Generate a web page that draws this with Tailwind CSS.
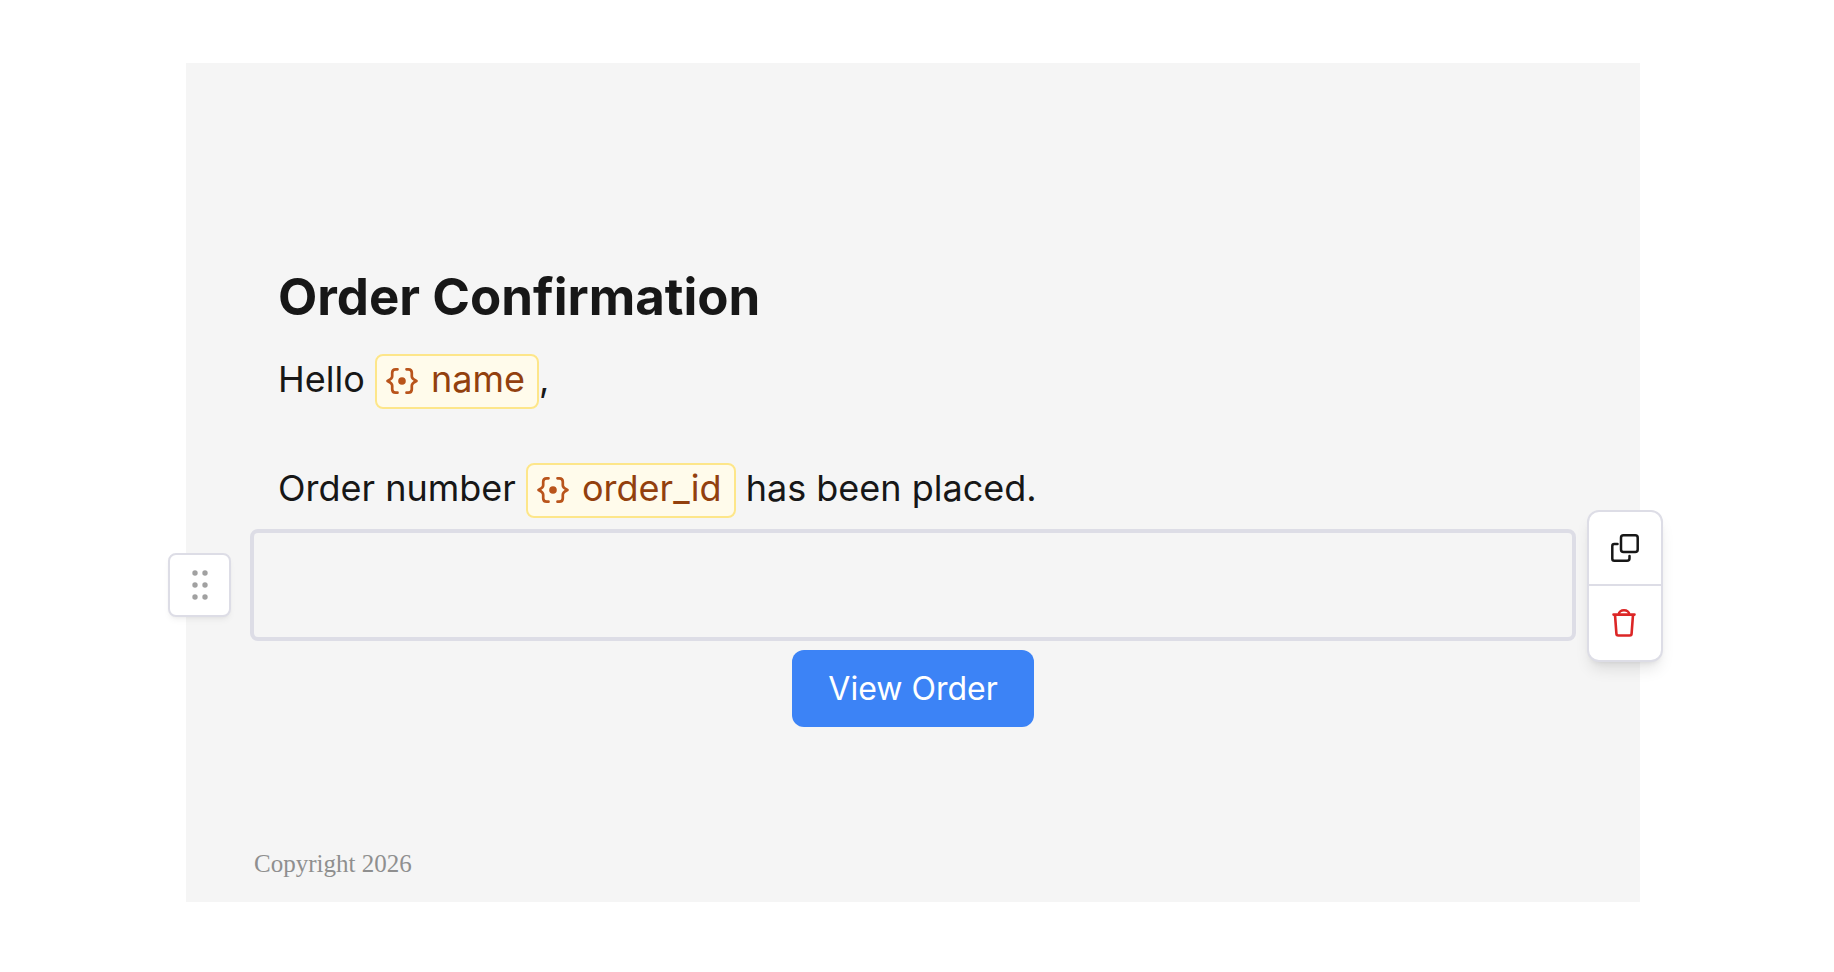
<!DOCTYPE html>
<html lang="en">
<head>
<meta charset="utf-8">
<meta name="viewport" content="width=device-width, initial-scale=1">
<title>Order Confirmation</title>
<script src="https://cdn.jsdelivr.net/npm/@tailwindcss/browser@4"></script>
</head>
<body class="bg-white font-['Inter',sans-serif] text-[#171717]">
<svg class="hidden" aria-hidden="true">
  <symbol id="variable" viewBox="0 0 34 28">
    <g fill="none" stroke="currentColor" stroke-width="2.7" stroke-linecap="round" stroke-linejoin="round">
      <path d="M12.500 2.300h-1.800c-2.500 0-3.500 1.200-3.500 3.500v3.500c0 2-1.500 3.200-4.700 4.700c3.200 1.500 4.700 2.700 4.700 4.700v3.500c0 2.300 1 3.500 3.500 3.500h1.800"/>
      <path d="M21.500 2.300h1.800c2.500 0 3.500 1.200 3.500 3.500v3.500c0 2 1.500 3.200 4.700 4.700c-3.200 1.500-4.700 2.700-4.700 4.700v3.500c0 2.300-1 3.500-3.500 3.500h-1.800"/>
    </g>
    <circle cx="17" cy="14" r="3.800" fill="currentColor"/>
  </symbol>
</svg>
<main class="pt-[63px] pb-[70px] pl-[186px] pr-[194px]">
  <article class="bg-[#f5f5f5] pt-[203px] pb-5 px-16">
    <div class="px-7">
      <h1 class="text-[51px] leading-[62px] font-bold">Order Confirmation</h1>
      <p class="mt-6 text-[36px] leading-[54px]">Hello <span class="rounded-lg border-2 border-[#fde68a] bg-[#fffbeb] pt-px pb-1.5 pl-2 pr-3 text-[#92400e]"><svg class="mr-3 inline h-7 w-[34px] align-[-3px] text-[#b9541b]" aria-hidden="true"><use href="#variable"/></svg>name</span>,</p>
      <p class="mt-[55px] text-[36px] leading-[54px]">Order number <span class="rounded-lg border-2 border-[#fde68a] bg-[#fffbeb] pt-px pb-1.5 pl-2 pr-3 text-[#92400e]"><svg class="mr-3 inline h-7 w-[34px] align-[-3px] text-[#b9541b]" aria-hidden="true"><use href="#variable"/></svg>order_id</span> has been placed.</p>
    </div>
    <div class="relative mt-3.5 h-28 rounded-lg border-4 border-[#dddde6]">
      <button type="button" aria-label="Drag block" class="absolute -left-[86px] top-5 flex h-16 w-[63px] items-center justify-center rounded-lg border-2 border-[#dddde6] bg-white text-[#a1a1a1] shadow-md shadow-black/5">
        <svg class="h-8 w-5" viewBox="0 0 20 32" fill="currentColor" aria-hidden="true"><circle cx="5" cy="4" r="2.700"/><circle cx="15" cy="4" r="2.700"/><circle cx="5" cy="16" r="2.700"/><circle cx="15" cy="16" r="2.700"/><circle cx="5" cy="28" r="2.700"/><circle cx="15" cy="28" r="2.700"/></svg>
      </button>
      <div class="absolute -right-[91px] -top-[23px] flex w-[76px] flex-col divide-y-2 divide-[#dddde6] rounded-xl border-2 border-[#dddde6] bg-white shadow-lg shadow-black/10">
        <button type="button" aria-label="Duplicate block" class="flex h-[74px] items-center justify-center">
          <svg class="h-7 w-7" viewBox="0 0 28 28" fill="none" stroke="currentColor" stroke-width="2.500" stroke-linecap="round" stroke-linejoin="round" aria-hidden="true"><rect x="10" y="1.300" width="16.700" height="16.700" rx="2.500"/><path d="M6.500 10H3.300a2 2 0 0 0-2 2V24.700a2 2 0 0 0 2 2H16a2.500 2.500 0 0 0 2.500-2.500V22"/></svg>
        </button>
        <button type="button" aria-label="Delete block" class="flex h-[74px] items-center justify-center text-[#dc2626]">
          <svg class="h-7 w-7" viewBox="0 0 28 28" fill="none" stroke="currentColor" stroke-width="2.600" stroke-linecap="round" stroke-linejoin="round" aria-hidden="true"><path d="M2.500 5.600H23.500M4 5.800L5.400 24.500a2 2 0 0 0 2 2H18.600a2 2 0 0 0 2-2L22 5.800M7.800 5.300a5.200 4 0 0 1 10.400 0"/></svg>
        </button>
      </div>
    </div>
    <div class="mt-[9px] flex justify-center">
      <a href="#" class="rounded-xl bg-[#3c83f6] px-9 py-[14px] text-[32px] leading-[49px] text-white">View Order</a>
    </div>
    <footer class="mt-[119px] px-1 font-['Liberation_Serif',serif] text-[25px] leading-[36px] text-[#8f8f8f]">Copyright 2026</footer>
  </article>
</main>
</body>
</html>
